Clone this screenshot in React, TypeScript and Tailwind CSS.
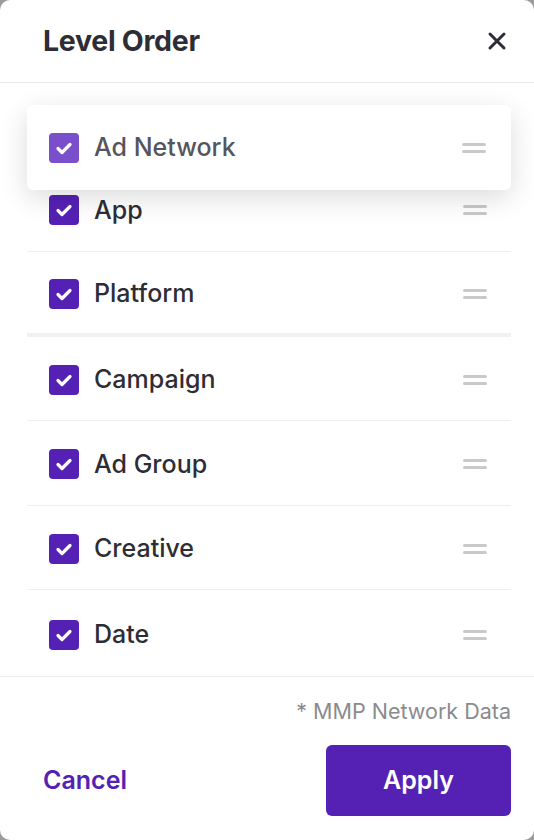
import React from "react";

const levels = ["App", "Platform", "Campaign", "Ad Group", "Creative", "Date"];

function Check({ faded }: { faded?: boolean }) {
  return (
    <span
      className={
        "flex h-[30px] w-[30px] shrink-0 items-center justify-center rounded-[4px] " +
        (faded ? "bg-[#7b4fcb]" : "bg-[#5521b5]")
      }
    >
      <svg width="30" height="30" viewBox="0 0 30 30" fill="none">
        <path d="M9 15.5l4 4 8-8" stroke="white" strokeWidth="3.2" strokeLinecap="round" strokeLinejoin="round" />
      </svg>
    </span>
  );
}

function Handle() {
  return (
    <span className="flex w-[24px] flex-col gap-[4px]">
      <span className="h-[3px] w-full rounded-sm bg-[#c9c9c9]" />
      <span className="h-[3px] w-full rounded-sm bg-[#c9c9c9]" />
    </span>
  );
}

export default function App() {
  return (
    <div className="h-[840px] w-[534px] bg-[#9b9b9b] font-['Inter','Liberation_Sans',sans-serif]">
      <div className="flex h-full w-full flex-col overflow-hidden rounded-[10px] bg-white">
        <div className="flex h-[83px] shrink-0 items-center justify-between border-b-[1.5px] border-[#e9e9e9] pl-[43px] pr-[22px]">
          <h1 className="text-[28.5px] font-bold tracking-[-0.3px] text-[#2e2d35]">Level Order</h1>
          <button className="flex h-[30px] w-[30px] items-center justify-center">
            <svg width="20" height="20" viewBox="0 0 20 20">
              <path d="M3 3l14 14M17 3L3 17" stroke="#2e2d35" strokeWidth="3" strokeLinecap="round" />
            </svg>
          </button>
        </div>

        <div className="relative shrink-0 border-b-[1.5px] border-[#ececec] pl-[27px] pr-[23px]">
          {/* placeholder for the row being dragged */}
          <div className="h-[84px] border-b border-[#eeeeee]" />
          {levels.map((l, i) => (
            <div
              key={l}
              className={
                "flex items-center pl-[22px] pr-[24px] pt-[3px] " +
                (i === levels.length - 1
                  ? "h-[86px]"
                  : i === 1
                  ? "h-[85px] border-b-4 border-[#f1f1f1]"
                  : "h-[84.5px] border-b-[1.5px] border-[#eeeeee]")
              }
            >
              <Check />
              <span className="ml-[15px] flex-1 text-[25px] font-medium text-[#2e2d35]">{l}</span>
              <Handle />
            </div>
          ))}

          {/* dragged row */}
          <div className="absolute left-[27px] right-[23px] top-[22px] flex h-[85px] items-center rounded-[6px] bg-white pl-[22px] pr-[25px] shadow-[0_8px_28px_rgba(0,0,0,0.14)]">
            <Check faded />
            <span className="ml-[15px] flex-1 text-[25px] font-medium text-[#56555d]">Ad Network</span>
            <Handle />
          </div>
        </div>

        <div className="flex flex-1 flex-col px-[23px] pt-[18px]">
          <p className="text-right text-[21.5px] text-[#8b8b8f]">* MMP Network Data</p>
          <div className="mt-[18px] flex items-center justify-between pl-[20px]">
            <button className="text-[25px] font-semibold text-[#5521b5]">Cancel</button>
            <button className="flex h-[71px] w-[185px] items-center justify-center rounded-[6px] bg-[#5521b5] text-[25px] font-semibold text-white">
              Apply
            </button>
          </div>
        </div>
      </div>
    </div>
  );
}
